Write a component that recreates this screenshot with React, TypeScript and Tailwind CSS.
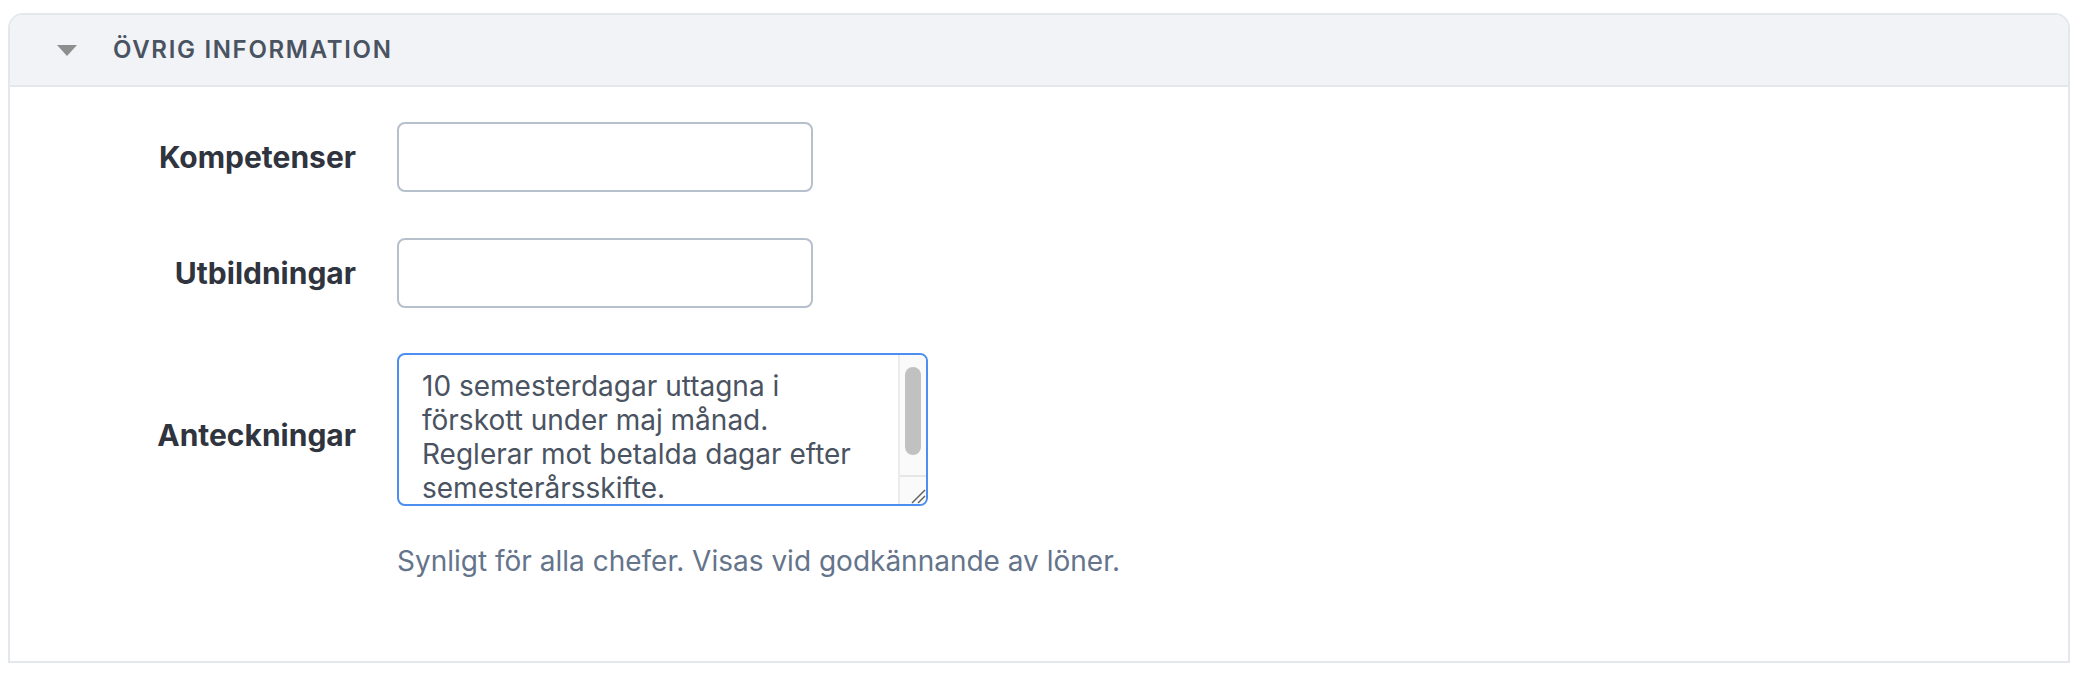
export default function App() {
  return (
    <div className="min-h-[682px] bg-white pt-[13px] pl-[8px] pr-[14px] font-[Inter,'Noto_Sans',sans-serif]">
      <div className="border-2 border-[#e4e7eb] rounded-t-[15px] overflow-hidden">
        <div className="h-[72px] bg-[#f1f3f7] border-b-2 border-[#e4e7eb] flex items-center pl-[47px]">
          <svg width="20" height="11" viewBox="0 0 20 11" className="shrink-0">
            <polygon points="0,0 20,0 10,11" fill="#8e8e8e" />
          </svg>
          <span className="ml-[36px] text-[24px] font-semibold tracking-[0.07em] text-[#4a5361] uppercase leading-none">
            Övrig information
          </span>
        </div>
        <div className="pt-[35px] pb-[84px]">
          <div className="flex items-center">
            <label className="w-[346px] shrink-0 text-right text-[30px] font-bold text-[#2f343e]">
              Kompetenser
            </label>
            <input
              type="text"
              className="ml-[41px] w-[416px] h-[70px] border-2 border-[#b6c0cd] rounded-[8px] bg-white outline-none"
            />
          </div>
          <div className="flex items-center mt-[46px]">
            <label className="w-[346px] shrink-0 text-right text-[30px] font-bold text-[#2f343e]">
              Utbildningar
            </label>
            <input
              type="text"
              className="ml-[41px] w-[416px] h-[70px] border-2 border-[#b6c0cd] rounded-[8px] bg-white outline-none"
            />
          </div>
          <div className="flex items-center mt-[45px]">
            <label className="w-[346px] shrink-0 text-right text-[30px] font-bold text-[#2f343e] mt-[12px]">
              Anteckningar
            </label>
            <div className="ml-[41px] w-[531px] h-[153px] border-2 border-[#4c8ff0] rounded-[8px] bg-white flex overflow-hidden">
              <div className="flex-1 pl-[23px] pt-[14px] text-[28px] leading-[34px] text-[#4a5361] overflow-hidden whitespace-nowrap">
                <div>10 semesterdagar uttagna i</div>
                <div>förskott under maj månad.</div>
                <div>Reglerar mot betalda dagar efter</div>
                <div>semesterårsskifte.</div>
              </div>
              <div className="w-[28px] shrink-0 border-l-2 border-[#ececec] bg-[#fafafa] flex flex-col">
                <div className="flex-1 flex justify-center">
                  <div className="mt-[12px] w-[16px] h-[88px] rounded-full bg-[#c1c1c1]" />
                </div>
                <div className="h-[29px] border-t-2 border-[#e6e6e6] flex items-end justify-end">
                  <svg width="16" height="16" viewBox="0 0 16 16">
                    <line x1="2" y1="15" x2="15" y2="2" stroke="#5f5f5f" strokeWidth="1.5" />
                    <line x1="8" y1="15" x2="15" y2="8" stroke="#5f5f5f" strokeWidth="1.5" />
                  </svg>
                </div>
              </div>
            </div>
          </div>
          <div className="mt-[39px] pl-[387px] text-[28px] leading-[32px] text-[#64748b]">
            Synligt för alla chefer. Visas vid godkännande av löner.
          </div>
        </div>
      </div>
    </div>
  );
}
